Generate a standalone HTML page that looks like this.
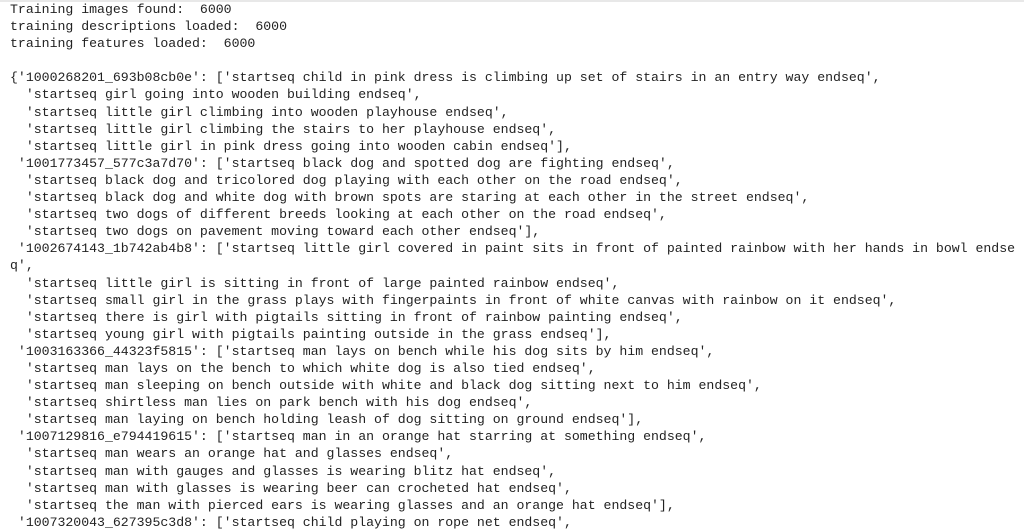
<!DOCTYPE html>
<html><head><meta charset="utf-8"><style>
html,body{margin:0;padding:0;background:#fff;width:1024px;height:515px;overflow:hidden}
.top{position:absolute;left:0;top:0;width:1024px;height:2px;background:#e8e8e8}
pre{position:absolute;left:10px;top:1px;margin:0;font-family:"Liberation Mono",monospace;font-size:13.2px;line-height:17.1px;color:#222;white-space:pre}
</style></head><body><div class="top"></div><pre>Training images found:  6000
training descriptions loaded:  6000
training features loaded:  6000

{'1000268201_693b08cb0e': ['startseq child in pink dress is climbing up set of stairs in an entry way endseq',
  'startseq girl going into wooden building endseq',
  'startseq little girl climbing into wooden playhouse endseq',
  'startseq little girl climbing the stairs to her playhouse endseq',
  'startseq little girl in pink dress going into wooden cabin endseq'],
 '1001773457_577c3a7d70': ['startseq black dog and spotted dog are fighting endseq',
  'startseq black dog and tricolored dog playing with each other on the road endseq',
  'startseq black dog and white dog with brown spots are staring at each other in the street endseq',
  'startseq two dogs of different breeds looking at each other on the road endseq',
  'startseq two dogs on pavement moving toward each other endseq'],
 '1002674143_1b742ab4b8': ['startseq little girl covered in paint sits in front of painted rainbow with her hands in bowl endse
q',
  'startseq little girl is sitting in front of large painted rainbow endseq',
  'startseq small girl in the grass plays with fingerpaints in front of white canvas with rainbow on it endseq',
  'startseq there is girl with pigtails sitting in front of rainbow painting endseq',
  'startseq young girl with pigtails painting outside in the grass endseq'],
 '1003163366_44323f5815': ['startseq man lays on bench while his dog sits by him endseq',
  'startseq man lays on the bench to which white dog is also tied endseq',
  'startseq man sleeping on bench outside with white and black dog sitting next to him endseq',
  'startseq shirtless man lies on park bench with his dog endseq',
  'startseq man laying on bench holding leash of dog sitting on ground endseq'],
 '1007129816_e794419615': ['startseq man in an orange hat starring at something endseq',
  'startseq man wears an orange hat and glasses endseq',
  'startseq man with gauges and glasses is wearing blitz hat endseq',
  'startseq man with glasses is wearing beer can crocheted hat endseq',
  'startseq the man with pierced ears is wearing glasses and an orange hat endseq'],
 '1007320043_627395c3d8': ['startseq child playing on rope net endseq',</pre></body></html>
